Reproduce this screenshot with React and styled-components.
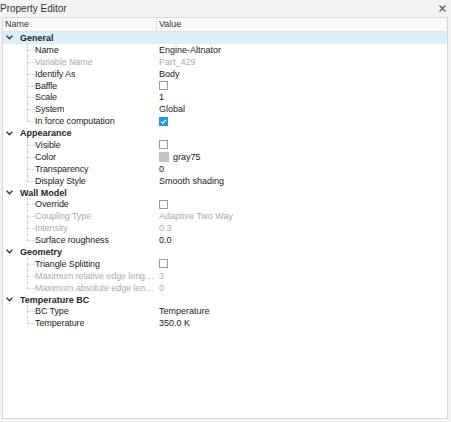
import React from "react";
import styled, { createGlobalStyle } from "styled-components";

const GlobalStyle = createGlobalStyle`
  html, body {
    margin: 0;
    padding: 0;
    background: #f3f3f3;
  }
  body {
    font-family: "Liberation Sans", Arial, sans-serif;
    color: #222;
  }
`;

const groups = [
  {
    name: "General",
    selected: true,
    items: [
      { label: "Name", value: "Engine-Altnator" },
      { label: "Variable Name", value: "Part_429", disabled: true },
      { label: "Identify As", value: "Body" },
      { label: "Baffle", check: false },
      { label: "Scale", value: "1" },
      { label: "System", value: "Global" },
      { label: "In force computation", check: true },
    ],
  },
  {
    name: "Appearance",
    items: [
      { label: "Visible", check: false },
      { label: "Color", value: "gray75", swatch: "#c4c4c4" },
      { label: "Transparency", value: "0" },
      { label: "Display Style", value: "Smooth shading" },
    ],
  },
  {
    name: "Wall Model",
    items: [
      { label: "Override", check: false },
      { label: "Coupling Type", value: "Adaptive Two Way", disabled: true },
      { label: "Intensity", value: "0.3", disabled: true },
      { label: "Surface roughness", value: "0.0" },
    ],
  },
  {
    name: "Geometry",
    items: [
      { label: "Triangle Splitting", check: false },
      { label: "Maximum relative edge leng…", value: "3", disabled: true },
      { label: "Maximum absolute edge len…", value: "0", disabled: true },
    ],
  },
  {
    name: "Temperature BC",
    items: [
      { label: "BC Type", value: "Temperature" },
      { label: "Temperature", value: "350.0 K" },
    ],
  },
];

export default function App() {
  return (
    <>
      <GlobalStyle />
      <Panel>
        <TitleBar>
          <span>Property Editor</span>
          <CloseButton aria-label="close">
            <svg width="7" height="7" viewBox="0 0 7 7">
              <path d="M0.5 0.5 L6.5 6.5 M6.5 0.5 L0.5 6.5" stroke="#555" strokeWidth="1.1" />
            </svg>
          </CloseButton>
        </TitleBar>
        <Frame>
          <HeaderRow>
            <HeaderCell $divider>Name</HeaderCell>
            <HeaderCell>Value</HeaderCell>
          </HeaderRow>
          {groups.map((g) => (
            <Group key={g.name}>
              <GroupRow $selected={g.selected}>
                <Chevron width="7" height="5" viewBox="0 0 7 5">
                  <path d="M0.6 0.8 L3.5 3.8 L6.4 0.8" fill="none" stroke="#333" strokeWidth="1.3" />
                </Chevron>
                <GroupLabel>{g.name}</GroupLabel>
              </GroupRow>
              {g.items.map((it, i) => (
                <PropRow key={it.label}>
                  <NameCell>
                    <TreeGuide $last={i === g.items.length - 1} />
                    <Label $disabled={it.disabled}>{it.label}</Label>
                  </NameCell>
                  <ValueCell $disabled={it.disabled}>
                    {it.check !== undefined && <CheckBox $checked={it.check}>
                      {it.check && (
                        <svg width="7" height="7" viewBox="0 0 7 7">
                          <path d="M1.2 3.8 L2.8 5.2 L5.8 1.8" fill="none" stroke="#fff" strokeWidth="1.1" />
                        </svg>
                      )}
                    </CheckBox>}
                    {it.swatch && <Swatch style={{ background: it.swatch }} />}
                    {it.value}
                  </ValueCell>
                </PropRow>
              ))}
            </Group>
          ))}
        </Frame>
      </Panel>
    </>
  );
}

const Panel = styled.div`
  width: 451px;
  height: 422px;
  display: flex;
  flex-direction: column;
  background: #f3f3f3;
`;

const TitleBar = styled.div`
  height: 17px;
  display: flex;
  align-items: center;
  justify-content: space-between;
  padding: 0 5px 0 0;
  font-size: 10px;
  color: #333;
`;

const CloseButton = styled.button`
  border: none;
  background: none;
  padding: 0;
  display: flex;
  cursor: pointer;
`;

const Frame = styled.div`
  flex: 1;
  margin: 0 3px 3px 2px;
  border: 1px solid #d8d8d8;
  background: #fff;
`;

const HeaderRow = styled.div`
  display: grid;
  grid-template-columns: 154px 1fr;
  height: 13px;
  border-bottom: 1px solid #e2e2e2;
  background: #fafafa;
`;

const HeaderCell = styled.div`
  font-size: 9px;
  line-height: 13px;
  padding-left: 2px;
  color: #333;
  border-right: ${(p) => (p.$divider ? "1px solid #e2e2e2" : "none")};
`;

const Group = styled.div``;

const GroupRow = styled.div`
  height: 11.9px;
  display: flex;
  align-items: center;
  background: ${(p) => (p.$selected ? "#d9f0fa" : "transparent")};
`;

const Chevron = styled.svg`
  margin: 0 0 0 3px;
  flex: none;
`;

const GroupLabel = styled.span`
  margin-left: 7px;
  font-size: 9px;
  font-weight: bold;
  color: #1f1f1f;
`;

const PropRow = styled.div`
  display: grid;
  grid-template-columns: 154px 1fr;
  height: 11.9px;
  font-size: 9px;
`;

const NameCell = styled.div`
  display: flex;
  align-items: center;
  overflow: hidden;
  white-space: nowrap;
`;

const TreeGuide = styled.span`
  position: relative;
  flex: none;
  width: 8px;
  height: 100%;
  margin-left: 24px;
  &::before {
    content: "";
    position: absolute;
    left: 0;
    top: 0;
    height: ${(p) => (p.$last ? "50%" : "100%")};
    border-left: 1px dotted #c8c8c8;
  }
  &::after {
    content: "";
    position: absolute;
    left: 0;
    right: 0;
    top: 50%;
    border-top: 1px dotted #c8c8c8;
  }
`;

const Label = styled.span`
  overflow: hidden;
  text-overflow: ellipsis;
  letter-spacing: -0.1px;
  color: ${(p) => (p.$disabled ? "#ababab" : "#222")};
`;

const ValueCell = styled.div`
  display: flex;
  align-items: center;
  padding-left: 2px;
  white-space: nowrap;
  color: ${(p) => (p.$disabled ? "#ababab" : "#222")};
`;

const CheckBox = styled.span`
  width: 9px;
  height: 9px;
  box-sizing: border-box;
  border: 1px solid ${(p) => (p.$checked ? "#1b9de2" : "#9a9a9a")};
  background: ${(p) => (p.$checked ? "#1b9de2" : "#fff")};
  display: flex;
  align-items: center;
  justify-content: center;
`;

const Swatch = styled.span`
  width: 10px;
  height: 10px;
  margin-right: 4px;
`;
